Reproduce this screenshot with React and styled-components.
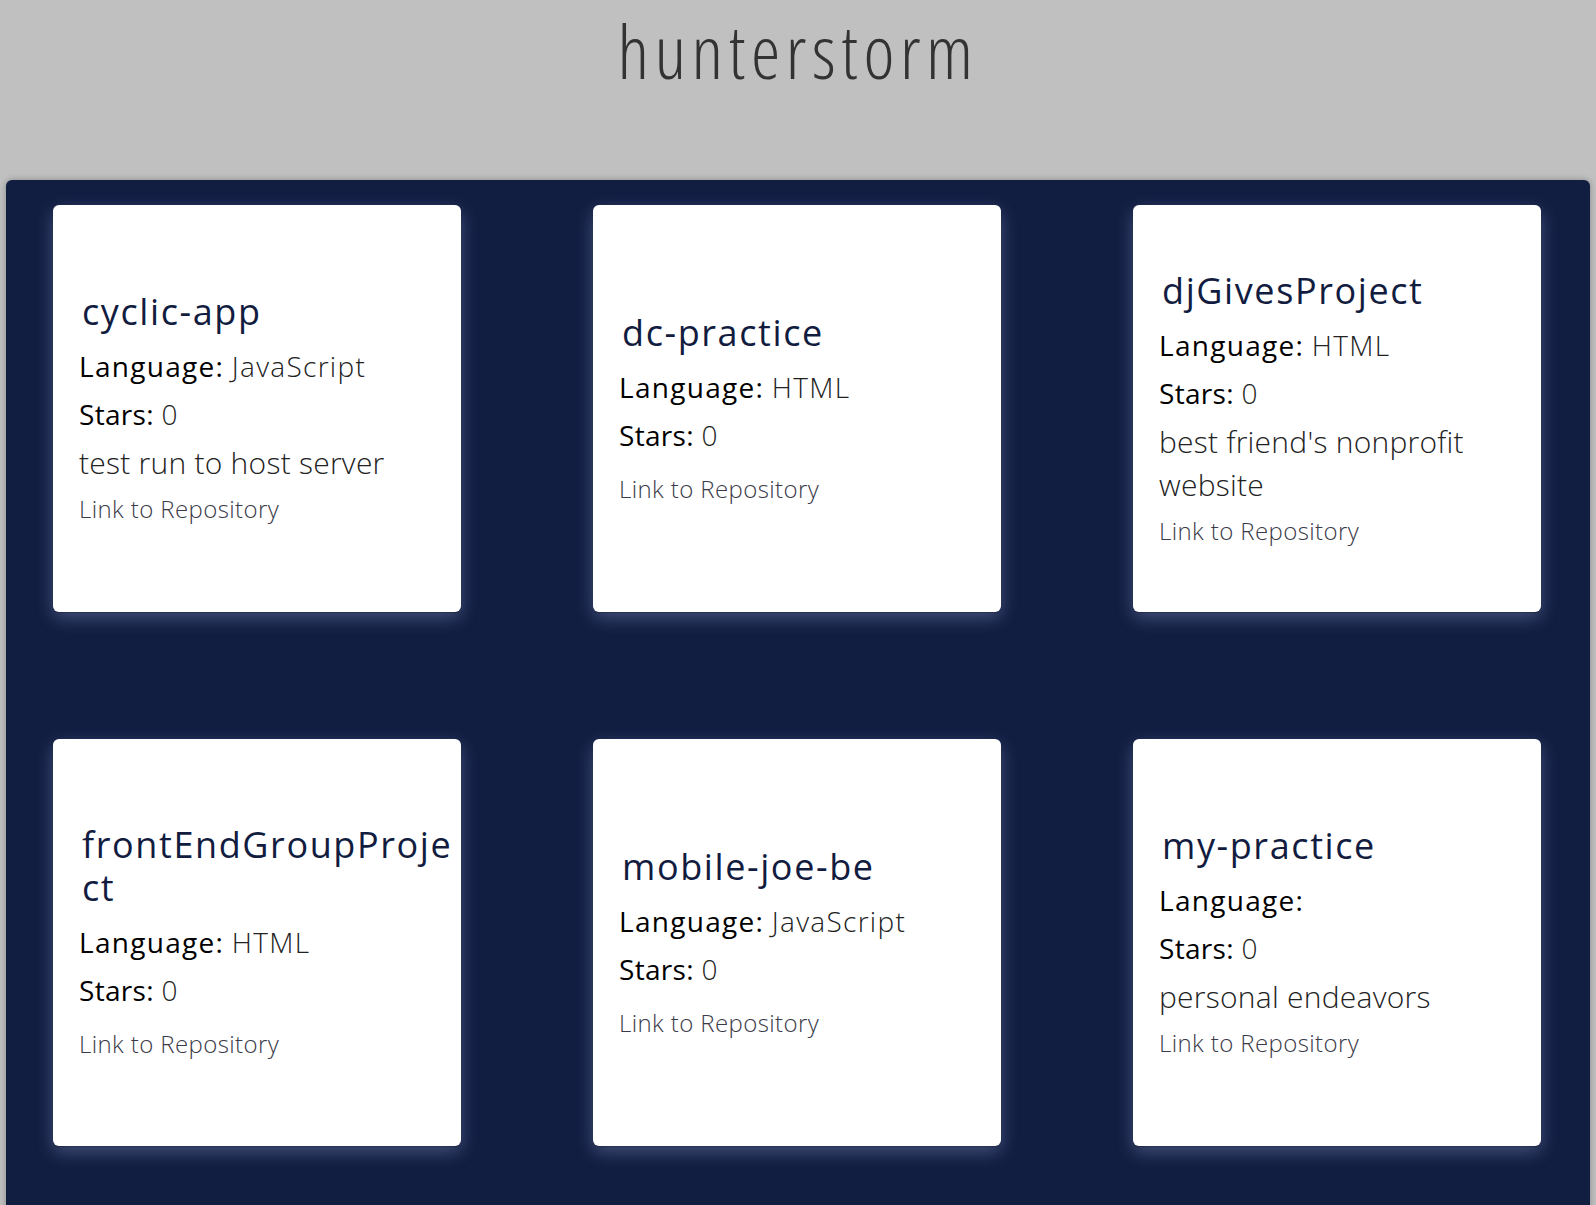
import React from "react";
import styled, { createGlobalStyle } from "styled-components";

const GlobalStyle = createGlobalStyle`
  body {
    margin: 0;
    background-color: #c0c0c0;
    font-family: "Open Sans", "Noto Sans", sans-serif;
  }
`;

const Header = styled.header`
  height: 180px;
  display: flex;
  justify-content: center;
  align-items: flex-start;
`;

const Title = styled.h1`
  margin: 0;
  padding-top: 14px;
  font-family: "Open Sans", sans-serif;
  font-weight: 300;
  font-size: 74px;
  line-height: 1;
  font-stretch: 75%;
  letter-spacing: 5.5px;
  color: #333;
`;

const Panel = styled.main`
  margin: 0 6px;
  padding: 25px 47px 80px 47px;
  background-color: #111d41;
  border-radius: 6px;
  box-shadow: 0 0 6px rgba(0, 0, 0, 0.3);
  display: grid;
  grid-template-columns: repeat(3, 408px);
  column-gap: 132px;
  row-gap: 127px;
`;

const Card = styled.div`
  height: 407px;
  box-sizing: border-box;
  padding: 0 26px;
  background-color: #fff;
  border-radius: 6px;
  box-shadow: 0 1px 1px rgba(0, 0, 0, 0.25), 0 6px 18px rgba(190, 205, 255, 0.3);
  display: flex;
  flex-direction: column;
  justify-content: center;
`;

const RepoName = styled.h2`
  margin: 0 -25px 9px 3px;
  font-weight: 400;
  font-size: 36px;
  line-height: 43px;
  letter-spacing: 1.6px;
  color: #121c3f;
  overflow-wrap: anywhere;
`;

const Row = styled.p`
  margin: 0;
  font-size: 28px;
  line-height: 48px;
  color: #000;
  font-weight: 400;
  letter-spacing: 0.3px;
`;

const Label = styled.span`
  letter-spacing: ${(p) => p.$spacing || "0.3px"};
`;

const Value = styled.span`
  font-weight: 300;
  color: #222;
  letter-spacing: 1.3px;
`;

const Desc = styled.p`
  margin: 3px 0 0 0;
  font-size: 30px;
  line-height: 43px;
  font-weight: 300;
  color: #222;
  letter-spacing: 0.25px;
`;

const RepoLink = styled.a`
  display: block;
  margin-top: ${(p) => (p.$afterDesc ? "7px" : "12px")};
  font-size: 24px;
  line-height: 36px;
  font-weight: 300;
  color: #3a3a48;
  text-decoration: none;
  letter-spacing: 0.4px;
`;

const repos = [
  { name: "cyclic-app", language: "JavaScript", stars: 0, description: "test run to host server" },
  { name: "dc-practice", language: "HTML", stars: 0 },
  { name: "djGivesProject", language: "HTML", stars: 0, description: "best friend's nonprofit website" },
  { name: "frontEndGroupProject", language: "HTML", stars: 0 },
  { name: "mobile-joe-be", language: "JavaScript", stars: 0 },
  { name: "my-practice", language: "", stars: 0, description: "personal endeavors" },
];

const RepoCard = ({ repo }) => (
  <Card>
    <RepoName>{repo.name}</RepoName>
    <Row>
      <Label $spacing="1.3px">Language:</Label> <Value>{repo.language}</Value>
    </Row>
    <Row>
      <Label>Stars:</Label> <Value>{repo.stars}</Value>
    </Row>
    {repo.description && <Desc>{repo.description}</Desc>}
    <RepoLink href="#" $afterDesc={!!repo.description}>
      Link to Repository
    </RepoLink>
  </Card>
);

const App = () => (
  <>
    <GlobalStyle />
    <Header>
      <Title>hunterstorm</Title>
    </Header>
    <Panel>
      {repos.map((repo) => (
        <RepoCard key={repo.name} repo={repo} />
      ))}
    </Panel>
  </>
);

export default App;
